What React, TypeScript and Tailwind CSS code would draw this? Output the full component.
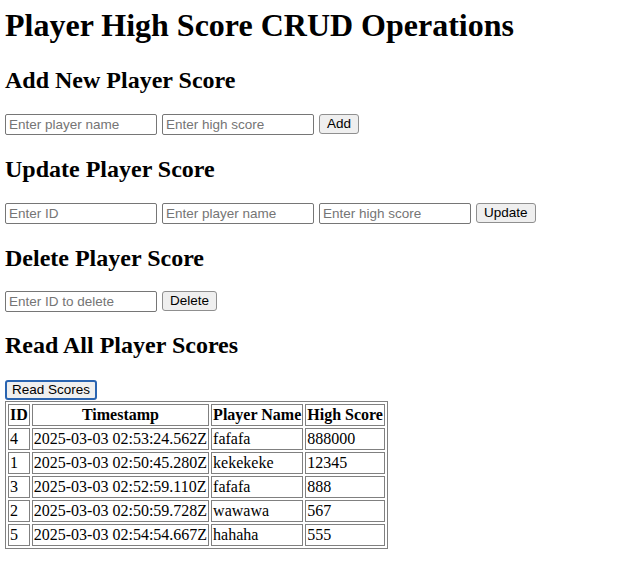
const scores = [
  { id: 4, timestamp: "2025-03-03 02:53:24.562Z", name: "fafafa", score: 888000 },
  { id: 1, timestamp: "2025-03-03 02:50:45.280Z", name: "kekekeke", score: 12345 },
  { id: 3, timestamp: "2025-03-03 02:52:59.110Z", name: "fafafa", score: 888 },
  { id: 2, timestamp: "2025-03-03 02:50:59.728Z", name: "wawawa", score: 567 },
  { id: 5, timestamp: "2025-03-03 02:54:54.667Z", name: "hahaha", score: 555 },
];

function Field({ placeholder }: { placeholder: string }) {
  return (
    <input
      placeholder={placeholder}
      className="w-[152px] h-[21px] border border-[#767676] rounded-[2px] px-[3px] bg-white text-[13.5px] font-['Liberation_Sans',Arial,sans-serif] text-black placeholder:text-[#757575] outline-none"
    />
  );
}

function Btn({ label, focused }: { label: string; focused?: boolean }) {
  return (
    <button
      className={`h-[20px] rounded-[3px] bg-[#efefef] text-[13.5px] leading-none font-['Liberation_Sans',Arial,sans-serif] text-black ${
        focused ? "border-2 border-[#2a64b0] px-[5px]" : "border border-[#8f8f8f] px-[7px]"
      }`}
    >
      {label}
    </button>
  );
}

export default function App() {
  return (
    <div className="min-h-[580px] bg-white text-black pt-[7px] px-[5px] font-['Liberation_Serif','Times_New_Roman',serif]">
      <h1 className="text-[32px] font-bold leading-[37px] mb-[22px]">Player High Score CRUD Operations</h1>

      {/* add */}
      <h2 className="text-[24px] font-bold leading-[28px] mb-[20px]">Add New Player Score</h2>
      <div className="flex items-start gap-[5px] h-[21px]">
        <Field placeholder="Enter player name" />
        <Field placeholder="Enter high score" />
        <Btn label="Add" />
      </div>

      {/* update */}
      <h2 className="text-[24px] font-bold leading-[28px] mt-[20px] mb-[20px]">Update Player Score</h2>
      <div className="flex items-start gap-[5px] h-[21px]">
        <Field placeholder="Enter ID" />
        <Field placeholder="Enter player name" />
        <Field placeholder="Enter high score" />
        <Btn label="Update" />
      </div>

      {/* delete */}
      <h2 className="text-[24px] font-bold leading-[28px] mt-[20px] mb-[19px]">Delete Player Score</h2>
      <div className="flex items-start gap-[5px] h-[21px]">
        <Field placeholder="Enter ID to delete" />
        <Btn label="Delete" />
      </div>

      {/* read */}
      <h2 className="text-[24px] font-bold leading-[28px] mt-[19px] mb-[21px]">Read All Player Scores</h2>
      <div className="flex h-[21px]">
        <Btn label="Read Scores" focused />
      </div>
      <table className="border-separate border-spacing-[2px] border border-[#808080] text-[16px] leading-[18px]">
        <thead>
          <tr>
            <th className="border border-[#808080] p-[1px] font-bold text-center">ID</th>
            <th className="border border-[#808080] p-[1px] font-bold text-center">Timestamp</th>
            <th className="border border-[#808080] p-[1px] font-bold text-center">Player Name</th>
            <th className="border border-[#808080] p-[1px] font-bold text-center">High Score</th>
          </tr>
        </thead>
        <tbody>
          {scores.map((s) => (
            <tr key={s.id}>
              <td className="border border-[#808080] p-[1px]">{s.id}</td>
              <td className="border border-[#808080] p-[1px]">{s.timestamp}</td>
              <td className="border border-[#808080] p-[1px]">{s.name}</td>
              <td className="border border-[#808080] p-[1px]">{s.score}</td>
            </tr>
          ))}
        </tbody>
      </table>
    </div>
  );
}
